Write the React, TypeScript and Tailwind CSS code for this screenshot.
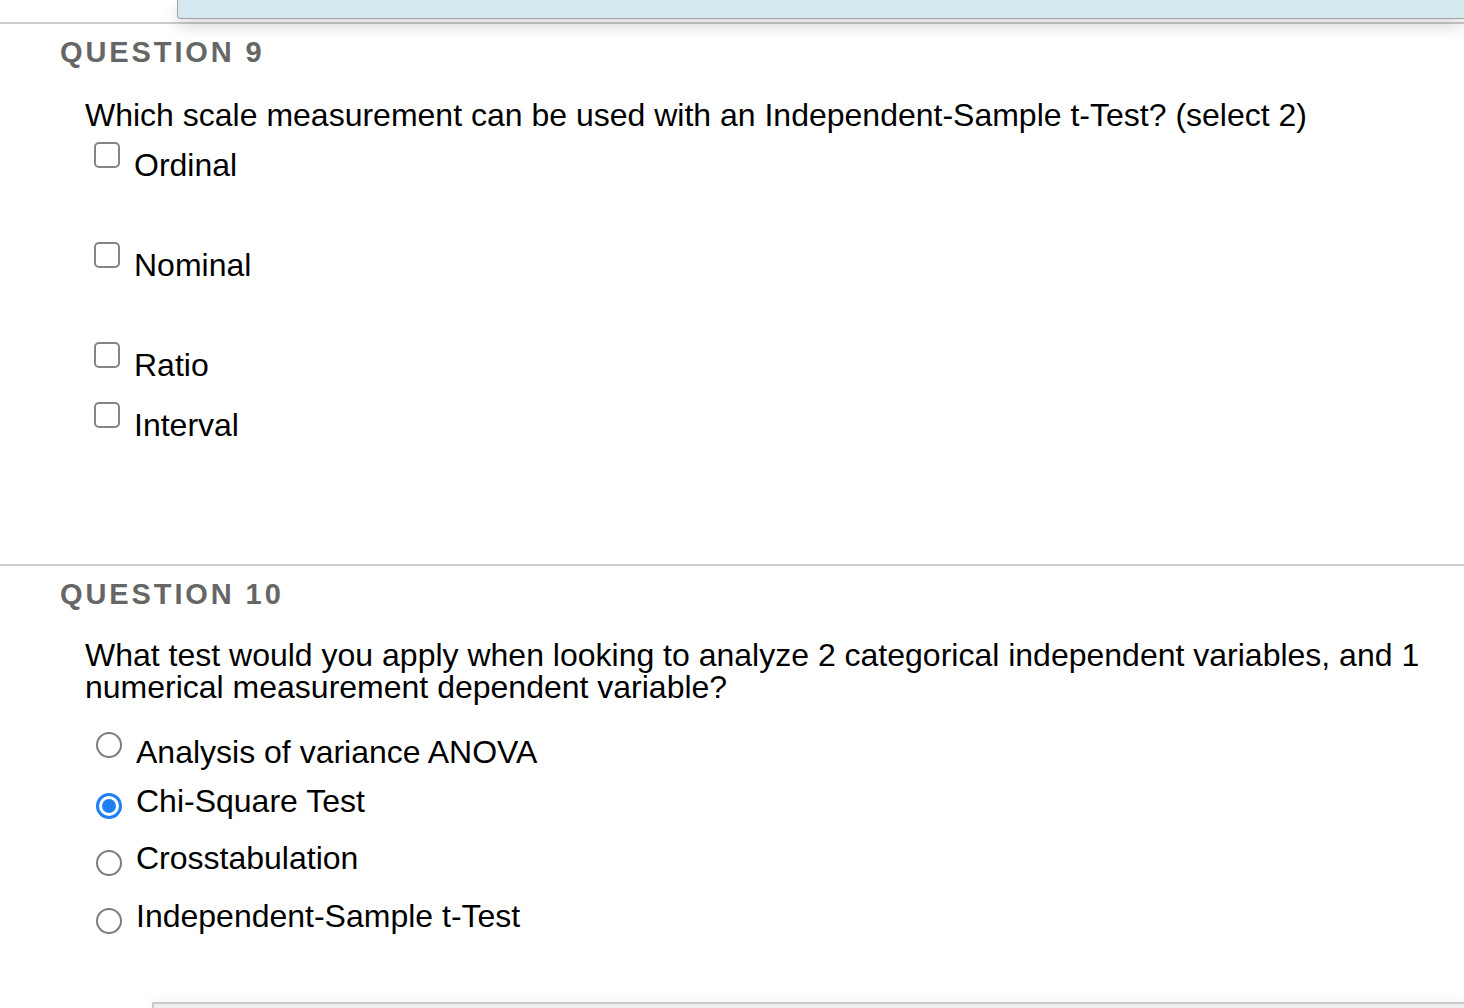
import React from "react";

const Checkbox = () => (
  <span className="block w-[26px] h-[26px] shrink-0 rounded-[5px] border-2 border-[#858585] bg-white" />
);

const Radio = ({ checked }: { checked?: boolean }) =>
  checked ? (
    <span className="flex items-center justify-center w-[26px] h-[26px] shrink-0 rounded-full border-[3px] border-[#1f7ff4] bg-white">
      <span className="block w-[14px] h-[14px] rounded-full bg-[#1f7ff4]" />
    </span>
  ) : (
    <span className="block w-[26px] h-[26px] shrink-0 rounded-full border-2 border-[#7d7d7d] bg-white" />
  );

const checkOptions = [
  { label: "Ordinal", h: "h-[100px]" },
  { label: "Nominal", h: "h-[100px]" },
  { label: "Ratio", h: "h-[60px]" },
  { label: "Interval", h: "h-[60px]" },
];

export default function App() {
  return (
    <div
      className="flex flex-col h-[1008px] overflow-hidden bg-white text-black"
      style={{ fontFamily: '"Liberation Sans", Arial, sans-serif' }}
    >
      {/* top bar */}
      <div className="h-[24px] shrink-0 border-b-2 border-[#cccccc]">
        <div className="ml-[177px] h-[19px] bg-[#d3e8ef] border-l border-b border-[#a3a3a3] rounded-bl-[4px] shadow-[0_8px_16px_rgba(0,0,0,0.14)]" />
      </div>

      {/* question 9 */}
      <section className="h-[542px] shrink-0 border-b-2 border-[#cccccc]">
        <h2 className="mt-[14px] ml-[60px] text-[29px] leading-[29px] font-bold tracking-[2.9px] text-[#666666]">
          QUESTION 9
        </h2>
        <div className="pl-[85px] pr-[30px]">
          <p className="mt-[32px] text-[32px] leading-[32px]">
            Which scale measurement can be used with an Independent-Sample t-Test? (select 2)
          </p>
          <div className="mt-[11px]">
            {checkOptions.map((o) => (
              <label key={o.label} className={`flex items-start ${o.h}`}>
                <span className="ml-[9px]">
                  <Checkbox />
                </span>
                <span className="ml-[14px] mt-[7px] text-[32px] leading-[32px]">
                  {o.label}
                </span>
              </label>
            ))}
          </div>
        </div>
      </section>

      {/* question 10 */}
      <section className="shrink-0">
        <h2 className="mt-[13.5px] ml-[60px] text-[29px] leading-[29px] font-bold tracking-[2.9px] text-[#666666]">
          QUESTION 10
        </h2>
        <div className="pl-[85px] pr-[30px]">
          <p className="mt-[30.5px] text-[32px] leading-[32px]">
            What test would you apply when looking to analyze 2 categorical independent variables, and 1 numerical measurement dependent variable?
          </p>
          <div className="mt-[29px]">
            <label className="flex items-start h-[53px]">
              <span className="ml-[11px]">
                <Radio />
              </span>
              <span className="ml-[14px] mt-[4px] text-[32px] leading-[32px]">
                Analysis of variance ANOVA
              </span>
            </label>
            <label className="flex items-start h-[57px]">
              <span className="ml-[11px] mt-[8px]">
                <Radio checked />
              </span>
              <span className="ml-[14px] text-[32px] leading-[32px]">
                Chi-Square Test
              </span>
            </label>
            <label className="flex items-start h-[58px]">
              <span className="ml-[11px] mt-[8px]">
                <Radio />
              </span>
              <span className="ml-[14px] text-[32px] leading-[32px]">
                Crosstabulation
              </span>
            </label>
            <label className="flex items-start h-[58px]">
              <span className="ml-[11px] mt-[8px]">
                <Radio />
              </span>
              <span className="ml-[14px] text-[32px] leading-[32px]">
                Independent-Sample t-Test
              </span>
            </label>
          </div>
        </div>
      </section>

      <div className="flex-1" />

      {/* bottom panel */}
      <div className="ml-[152px] h-[6px] shrink-0 border-t-2 border-l-2 border-[#c9c9c9] bg-[#eeeeee] shadow-[0_0_14px_rgba(0,0,0,0.1)]" />
    </div>
  );
}
